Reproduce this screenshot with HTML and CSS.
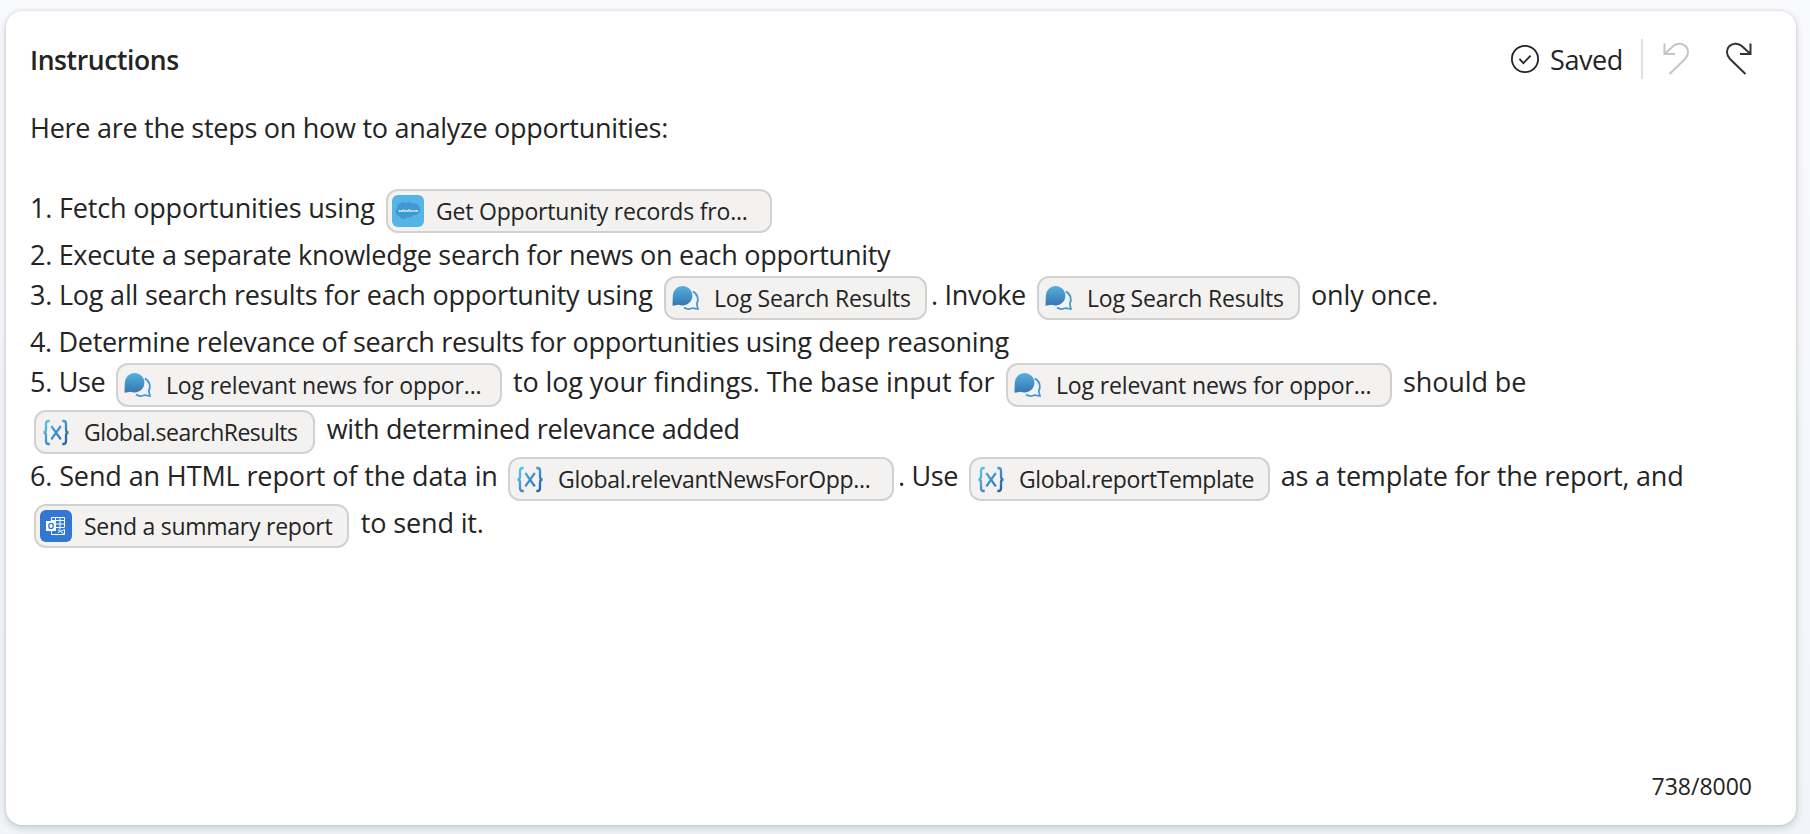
FILE: index.html
```html
<!DOCTYPE html>
<html lang="en">
<head>
<meta charset="utf-8">
<title>Instructions</title>
<link rel="stylesheet" href="styles.css">
</head>
<body>
<svg class="defs" width="0" height="0" aria-hidden="true">
  <defs>
    <linearGradient id="chatFill" x1="0" y1="0" x2="0" y2="1"><stop offset="0" stop-color="#54b1dd"/><stop offset="1" stop-color="#3475b2"/></linearGradient>
    <linearGradient id="varFill" gradientUnits="userSpaceOnUse" x1="4" y1="4" x2="28" y2="28"><stop offset="0" stop-color="#5ecbf0"/><stop offset="1" stop-color="#225c9f"/></linearGradient>
    <symbol id="chat" viewBox="0 0 32 32">
      <path fill="url(#chatFill)" d="M12.500 4a9.900 9.700 0 1 1-3.700 18.700L2.500 23.800l.3-10A9.900 9.700 0 0 1 12.500 4z"/>
      <path fill="none" stroke="#4596cb" stroke-width="1.700" d="M22.800 9.500c5 2.500 6.300 8 4 12.300l1.100 5.200-5.200-.9c-3.200 1.500-6.200 1.200-8.700-.6"/>
    </symbol>
    <symbol id="variable" viewBox="0 0 32 32">
      <g fill="none" stroke="url(#varFill)" stroke-width="2.300">
        <path d="M9.700 5H8.500C6.500 5 6 6.500 6 8v5.500c0 2-1 3-2.500 3 1.500 0 2.500 1 2.500 3V25c0 1.700.5 3 2.500 3h1.200M22.300 5h1.200c2 0 2.500 1.500 2.500 3v5.500c0 2 1 3 2.500 3-1.500 0-2.500 1-2.500 3V25c0 1.700-.5 3-2.500 3h-1.200"/>
        <path d="M11.300 10l9.500 13.300M20.800 10l-9.500 13.300"/>
      </g>
    </symbol>
  </defs>
</svg>
<main class="card">
  <header class="header">
    <h1 class="title">Instructions</h1>
    <div class="actions">
      <svg class="check" viewBox="0 0 28 28"><circle cx="14" cy="14" r="13.100"/><path d="M8.400 13.900l4 4.200 7.200-7.400"/></svg>
      <span class="saved">Saved</span>
      <span class="divider"></span>
      <svg class="undo" viewBox="0 0 32 40"><path d="M3.500 3.500V14H14M3.500 14L12.500 5.800C21.500-1 32.500 9.500 24 19L8.500 34"/></svg>
      <svg class="redo" viewBox="0 0 32 40"><path d="M28.500 3.500V14H18M28.500 14L19.500 5.800C10.500-1-.5 9.500 8 19L23.500 34"/></svg>
    </div>
  </header>
  <section class="editor">
    <div class="line"><span class="t0">Here are the steps on how to analyze opportunities:</span></div>
    <div class="line"></div>
    <div class="line tall"><span class="t1">1. Fetch opportunities using </span><span class="chip wide"><svg class="icon" viewBox="0 0 32 32"><rect width="32" height="32" rx="6" fill="#55b3e6"/><path fill="#3f97d3" d="M8 8.500c2-2 5-1.500 6 0 2-2 5-1.500 6 .5 4-1.500 8 1.500 8 5.500s-4 6.500-7 5.500c-1 2.500-4 3-5.500 1.500-2 3.500-7 3-8-.5C3 20.500 2 15.500 5.500 13.500c-1-2 .5-4.500 2.500-5z"/><text class="sf" x="6.500" y="16.500" textLength="19.500" lengthAdjust="spacingAndGlyphs">salesforce</text></svg><span class="c1">Get Opportunity records fro...</span></span></div>
    <div class="line"><span class="t2">2. Execute a separate knowledge search for news on each opportunity</span></div>
    <div class="line tall"><span class="t3">3. Log all search results for each opportunity using </span><span class="chip log"><svg class="icon"><use href="#chat"/></svg><span class="c2">Log Search Results</span></span><span class="t4">. Invoke </span><span class="chip log"><svg class="icon"><use href="#chat"/></svg><span class="c2">Log Search Results</span></span><span class="t5"> only once.</span></div>
    <div class="line"><span class="t6">4. Determine relevance of search results for opportunities using deep reasoning</span></div>
    <div class="line tall"><span class="t7">5. Use </span><span class="chip wide"><svg class="icon"><use href="#chat"/></svg><span class="c3">Log relevant news for oppor...</span></span><span class="t8"> to log your findings. The base input for </span><span class="chip wide"><svg class="icon"><use href="#chat"/></svg><span class="c3">Log relevant news for oppor...</span></span><span class="t9"> should be</span></div>
    <div class="line tall"><span class="chip results"><svg class="icon"><use href="#variable"/></svg><span class="c4">Global.searchResults</span></span><span class="t10"> with determined relevance added</span></div>
    <div class="line tall"><span class="t11">6. Send an HTML report of the data in </span><span class="chip wide"><svg class="icon"><use href="#variable"/></svg><span class="c5">Global.relevantNewsForOpp...</span></span><span class="t12">. Use </span><span class="chip template"><svg class="icon"><use href="#variable"/></svg><span class="c6">Global.reportTemplate</span></span><span class="t13"> as a template for the report, and</span></div>
    <div class="line tall"><span class="chip summary"><svg class="icon" viewBox="0 0 32 32"><rect width="32" height="32" rx="6" fill="#3277d3"/><path fill="none" stroke="#fff" stroke-width="1" d="M11.500 11V7.500h13V17M11.500 10.500h13M15.500 7.500V14M20 7.500v12M16 14h8.500M16 17.500h8.500M11.500 21v3.500h13v-5L18 22.500M18 19.500l6.500 5"/><rect x="6" y="11" width="10" height="10" fill="#fff"/><ellipse cx="11" cy="16" rx="2.200" ry="2.600" fill="none" stroke="#3277d3" stroke-width="1.300"/></svg><span class="c7">Send a summary report</span></span><span class="t14"> to send it.</span></div>
  </section>
  <footer class="count">738/8000</footer>
</main>
</body>
</html>
```
FILE: styles.css
```css
* { box-sizing: border-box; }
body {
  margin: 0;
  height: 834px;
  padding: 11px 14px 9px 6px;
  overflow: hidden;
  background: linear-gradient(#f9fafe, #f1f5fa);
  font-family: "Open Sans", "Noto Sans", sans-serif;
  color: #242424;
}
.defs { position: absolute; }
.card {
  display: flex;
  flex-direction: column;
  height: 814px;
  padding: 0 44px 0 24px;
  background: #fff;
  border-radius: 16px;
  box-shadow: 0 0 3px rgba(0,0,0,.14), 0 3px 8px rgba(0,0,0,.16);
}
.header { display: flex; justify-content: space-between; height: 97px; }
.title { margin: 29px 0 0; font-size: 26.500px; font-weight: 600; line-height: 40px; letter-spacing: -.4px; }
.actions { display: flex; align-items: flex-start; margin-right: -2px; }
.check { width: 28px; height: 28px; margin: 34px 11px 0 0; fill: none; stroke: #242424; stroke-width: 1.800; }
.saved { width: 91px; margin-top: 29px; font-size: 27px; line-height: 40px; letter-spacing: -.4px; }
.divider { width: 2px; height: 40px; margin-top: 28px; background: #e0e0e0; }
.undo, .redo { width: 32px; height: 40px; margin-top: 29px; fill: none; stroke-width: 2; }
.undo { margin-left: 18px; stroke: #c4c4c4; }
.redo { margin-left: 29px; stroke: #333; }
.editor { flex: 1; font-size: 27px; }
.line { display: flex; align-items: flex-start; height: 40px; line-height: 40px; white-space: pre; }
.tall { height: 47px; }
.chip {
  display: flex;
  align-items: center;
  flex: none;
  height: 44px;
  margin: 1px 4px 0;
  padding-left: 4px;
  gap: 12px;
  border: 2px solid #d1d1d1;
  border-radius: 12px;
  background: #f3f2f1;
  font-size: 23px;
}
.icon { width: 32px; height: 32px; flex: none; }
.sf { font-size: 4px; font-weight: 700; fill: #fff; }
.wide { width: 386px; }
.log { width: 263px; }
.results { width: 281px; }
.template { width: 301px; }
.summary { width: 315px; }

/* Text runs between chips */
.t0 { letter-spacing: -.27px; }
.t1 { width: 352px; letter-spacing: -.18px; }
.t2 { letter-spacing: -.295px; }
.t3 { width: 630px; letter-spacing: -.21px; }
.t4 { width: 102px; letter-spacing: -.3px; }
.t5 { letter-spacing: -.08px; }
.t6 { letter-spacing: -.325px; }
.t7 { width: 82px; letter-spacing: -.3px; }
.t8 { width: 496px; letter-spacing: -.1px; }
.t9 { letter-spacing: -.1px; }
.t10 { padding-left: 1px; letter-spacing: -.34px; }
.t11 { width: 474px; letter-spacing: -.12px; }
.t12 { width: 67px; letter-spacing: -.35px; }
.t13 { letter-spacing: -.23px; }
.t14 { padding-left: 1px; letter-spacing: -.15px; }

/* Chip labels */
.c1 { letter-spacing: -.2px; }
.c2 { letter-spacing: -.19px; }
.c3 { letter-spacing: -.15px; }
.c4 { letter-spacing: -.5px; }
.c5 { letter-spacing: -.3px; }
.c6 { letter-spacing: -.4px; }
.c7 { letter-spacing: -.25px; }

.count { height: 63px; text-align: right; font-size: 23px; line-height: 48px; }
```
